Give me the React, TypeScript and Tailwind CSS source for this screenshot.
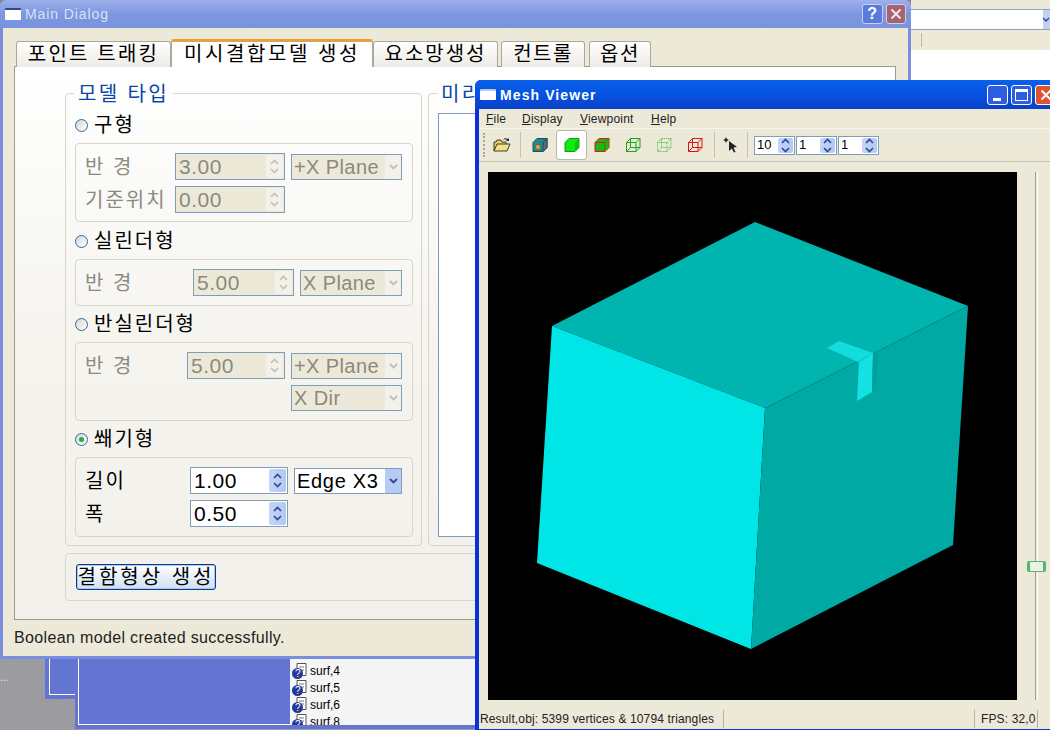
import type { ReactNode } from "react";

const surfs = ["surf,4", "surf,5", "surf,6", "surf,8"];

const menus = [
    { first: "F", rest: "ile", width: "w-[36px]" },
    { first: "D", rest: "isplay", width: "w-[58px]" },
    { first: "V", rest: "iewpoint", width: "w-[71px]" },
    { first: "H", rest: "elp", width: "w-[40px]" },
];

// small up/down pair used by every spin box
const Arrows = ({ active, small }: { active?: boolean; small?: boolean }) => (
    <span
        className={`flex flex-col items-center justify-center gap-[3px] self-stretch m-px rounded-[2px] ${small ? "w-[15px]" : "w-[17px]"} ${active ? "bg-gradient-to-r from-[#c4d5f8] to-[#b2c8f3]" : "bg-[#f2f1ea]"}`}
    >
        <svg width="9" height="6" viewBox="0 0 9 6">
            <path d="M1 5l3.5-3.5L8 5" fill="none" stroke={active ? "#2b4a8c" : "#c2c0b4"} strokeWidth="1.6" />
        </svg>
        <svg width="9" height="6" viewBox="0 0 9 6">
            <path d="M1 1l3.5 3.5L8 1" fill="none" stroke={active ? "#2b4a8c" : "#c2c0b4"} strokeWidth="1.6" />
        </svg>
    </span>
);

const Spin = ({ value, width, active }: { value: string; width: string; active?: boolean }) => (
    <div
        className={`flex h-[27px] shrink-0 items-center justify-between border border-[#7f9db9] pl-[2px] text-[21px] tracking-[0.5px] ${width} ${active ? "bg-white text-black" : "bg-[#ece9d8] text-[#8b8a7e]"}`}
    >
        <span className="pl-px">{value}</span>
        <Arrows active={active} />
    </div>
);

const Select = ({ value, width, active, className }: { value: string; width: string; active?: boolean; className?: string }) => (
    <div
        className={`flex h-[26px] shrink-0 items-center justify-between border border-[#7f9db9] pl-[2px] text-[20px] ${width} ${active ? "bg-white text-black tracking-[0.7px]" : "bg-[#ece9d8] text-[#8b8a7e] tracking-[0.4px]"} ${className ?? ""}`}
    >
        <span className="whitespace-nowrap">{value}</span>
        <span className={`flex h-full w-[16px] items-center justify-center ${active ? "bg-[#b6cbf5]" : "bg-[#f2f1ea]"}`}>
            <svg width="9" height="6" viewBox="0 0 9 6">
                <path d="M1 1l3.5 3.5L8 1" fill="none" stroke={active ? "#2b4a8c" : "#c2c0b4"} strokeWidth="1.8" />
            </svg>
        </span>
    </div>
);

const Radio = ({ label, checked, className }: { label: string; checked?: boolean; className?: string }) => (
    <div className={`ml-[9px] flex h-[24px] items-center gap-[6px] text-[20px] tracking-[2px] text-black ${className ?? ""}`}>
        <span className="flex h-[13px] w-[13px] items-center justify-center rounded-full border border-[#2f6a9a] bg-gradient-to-br from-[#d4d8d8] to-white">
            {checked && <span className="h-[5px] w-[5px] rounded-full bg-[#2fa84a]" />}
        </span>
        {label}
    </div>
);

const Box = ({ height, className, children }: { height: string; className?: string; children: ReactNode }) => (
    <div className={`ml-[9px] w-[338px] rounded-[4px] border border-[#d8d6ca] pl-[9px] ${height} ${className ?? ""}`}>{children}</div>
);

const CubeWire = ({ color, dotted }: { color: string; dotted?: boolean }) => (
    <svg width="16" height="16" viewBox="0 0 16 16" fill="none" stroke={color} strokeWidth="1" strokeDasharray={dotted ? "1 1" : undefined}>
        <path d="M1.5 5.5h9.5v9h-9.5zM1.5 5.5l4-4h9.5l-4 4M15 1.5v9l-4 4M5.5 1.5v9h9.5M5.5 10.5l-4 4" />
    </svg>
);

const CubeSolid = ({ face, edge }: { face: string; edge: string }) => (
    <svg width="16" height="16" viewBox="0 0 16 16">
        <path d="M1 5.5l4-4h10v9l-4 4H1z" fill={face} stroke={edge} />
        <path d="M1 5.5h10v9M11 5.5l4-4" fill="none" stroke={edge} />
        <path d="M11 5.5l4-4v9l-4 4z" fill={face} opacity="0.75" />
    </svg>
);

const ToolSpin = ({ value }: { value: string }) => (
    <div className="flex h-[19px] w-[41px] items-center justify-between border border-[#7f9db9] bg-white pl-[2px] text-[13px] text-black">
        {value}
        <Arrows active small />
    </div>
);

const Sep = () => <span className="mx-[1px] block h-[26px] w-px bg-[#c5c2b0]" />;

export default function App() {
    return (
        <div className="relative h-[730px] w-[1050px] overflow-hidden bg-[#85858a] font-['Liberation_Sans','Noto_Sans_CJK_KR',sans-serif]">
            {/* window behind, top right */}
            <div className="absolute left-[911px] top-0 flex h-[80px] w-[139px] flex-col bg-white">
                <div className="h-[9px] bg-[#ece9d8]" />
                <div className="flex h-[21px] items-center justify-end border-y border-[#8fa3b8] bg-white">
                    <span className="flex h-full w-[7px] items-center bg-[#c3d2f4]">
                        <svg width="7" height="6" viewBox="0 0 7 6">
                            <path d="M0 1l3 3 3-3" fill="none" stroke="#2b4a8c" strokeWidth="1.5" />
                        </svg>
                    </span>
                </div>
                <div className="flex h-[20px] items-center bg-[#ece9d8] pl-[10px]">
                    <span className="h-[14px] w-px bg-[#bdbaa8]" />
                </div>
            </div>

            {/* desktop leftovers below the dialog */}
            <div className="absolute left-0 top-[659px] h-[71px] w-[475px]">
                <svg className="absolute left-0 top-0" width="475" height="71">
                    <filter id="granite">
                        <feTurbulence type="fractalNoise" baseFrequency="0.7" numOctaves="2" seed="4" />
                        <feColorMatrix values="0 0 0 0 0.35  0 0 0 0 0.35  0 0 0 0 0.37  1.4 0 0 0 -0.3" />
                    </filter>
                    <rect width="475" height="71" fill="#9a9a9e" />
                    <rect width="475" height="71" filter="url(#granite)" />
                </svg>
                <span className="absolute left-0 top-[11px] text-[11px] leading-[14px] text-[#e4e4e4]">...</span>
                <div className="absolute left-[45px] top-0 h-[40px] w-[40px] bg-[#6374d2]">
                    <div className="ml-[4px] h-[36px] border-b border-l border-white" />
                </div>
                <div className="absolute left-[75px] top-0 flex h-[70px] w-[400px] bg-[#6374d2]">
                    <div className="ml-[3px] h-[66px] w-[212px] border-b border-l border-white" />
                    <div className="h-[66px] flex-1 overflow-hidden bg-[#f5f5f5] pl-[2px] pt-[3px]">
                        {surfs.map((s) => (
                            <div key={s} className="flex h-[17px] items-center gap-[3px] text-[12px] text-black">
                                <svg width="15" height="16" viewBox="0 0 15 16">
                                    <path d="M5 .5h9v12H5z" fill="#fff" stroke="#555" />
                                    <path d="M7 4h5M8 7h4" stroke="#777" />
                                    <circle cx="5.5" cy="10.5" r="5.5" fill="#23389a" />
                                    <text x="3" y="14" fontSize="10" fill="#fff" fontFamily="Liberation Sans">?</text>
                                </svg>
                                {s}
                            </div>
                        ))}
                    </div>
                </div>
            </div>

            {/* Main Dialog */}
            <div className="absolute left-0 top-0 flex h-[659px] w-[911px] flex-col rounded-t-[6px] bg-[#7b8ede] px-[3px] pb-[3px]">
                <div className="-mx-[3px] flex h-[28px] shrink-0 items-center rounded-t-[6px] bg-gradient-to-b from-[#9db0ea] via-[#7d96e0] to-[#7a93de] pl-[5px] pr-[5px] text-[14px] tracking-[0.9px] text-[#d9e0f6]">
                    <span className="mr-[4px] h-[12px] w-[16px] rounded-[1px] border-t-[2px] border-[#31488f] bg-white" />
                    Main Dialog
                    <div className="ml-auto flex items-center gap-[3px]">
                        <span className="flex h-[20px] w-[21px] items-center justify-center rounded-[3px] border border-[#c5d0f2] bg-[#5b7bdb] text-[16px] font-bold leading-none text-white">?</span>
                        <span className="flex h-[20px] w-[20px] items-center justify-center rounded-[3px] border border-[#c5d0f2] bg-[#a7646f]">
                            <svg width="12" height="12" viewBox="0 0 12 12">
                                <path d="M1.5 1.5l9 9M10.5 1.5l-9 9" stroke="#f2e6e6" strokeWidth="2" />
                            </svg>
                        </span>
                    </div>
                </div>

                <div className="flex min-h-0 flex-1 flex-col bg-[#ece9d8] pl-[11px] pr-[12px]">
                    {/* tabs */}
                    <div className="relative z-10 -mb-px flex h-[39px] shrink-0 items-end pl-[2px] text-[20px] text-black">
                        <div className="flex h-[26px] w-[155px] items-center justify-center rounded-t-[3px] border border-b-0 border-[#aca899] bg-gradient-to-b from-white to-[#ecebe4] pb-[2px] tracking-[2.2px]">포인트 트래킹</div>
                        <div className="flex h-[28px] w-[202px] items-center justify-center rounded-t-[3px] border-x border-t-[3px] border-[#aca899] border-t-[#e6a23c] bg-white pb-[2px] tracking-[2.6px]">미시결합모델 생성</div>
                        <div className="flex h-[26px] w-[125px] items-center justify-center rounded-t-[3px] border border-b-0 border-[#aca899] bg-gradient-to-b from-white to-[#ecebe4] pb-[2px] tracking-[2px]">요소망생성</div>
                        <div className="ml-[3px] flex h-[26px] w-[84px] items-center justify-center rounded-t-[3px] border border-b-0 border-[#aca899] bg-gradient-to-b from-white to-[#ecebe4] pb-[2px] tracking-[1.5px]">컨트롤</div>
                        <div className="ml-[4px] flex h-[26px] w-[62px] items-center justify-center rounded-t-[3px] border border-b-0 border-[#aca899] bg-gradient-to-b from-white to-[#ecebe4] pb-[2px] tracking-[1.5px]">옵션</div>
                    </div>

                    {/* pane */}
                    <div className="flex h-[554px] shrink-0 flex-col border border-[#9a9a8e] bg-gradient-to-b from-white via-[#f5f4ef] to-[#f1f0ea] pl-[50px] pt-[26px]">
                        <div className="flex gap-[6px]">
                            <div className="relative h-[453px] w-[357px] shrink-0 rounded-[4px] border border-[#d8d6ca] pt-[19px]">
                                <span className="absolute -top-[13px] left-[8px] bg-[#fdfdfc] px-[4px] text-[20px] leading-[26px] tracking-[2.4px] text-[#0a46a8]">모델 타입</span>
                                <Radio label="구형" />
                                <Box height="h-[79px]" className="mt-[6px] pt-[9px]">
                                    <div className="flex h-[27px] items-center text-[20px] tracking-[2px] text-[#8b8a7e]">
                                        <span className="w-[90px] whitespace-pre">반 경</span>
                                        <Spin value="3.00" width="w-[110px]" />
                                        <Select value="+X Plane" width="w-[111px]" className="ml-[6px]" />
                                    </div>
                                    <div className="mt-[6px] flex h-[27px] items-center text-[20px] tracking-[2px] text-[#8b8a7e]">
                                        <span className="w-[90px] whitespace-nowrap">기준위치</span>
                                        <Spin value="0.00" width="w-[110px]" />
                                    </div>
                                </Box>
                                <Radio label="실린더형" className="mt-[7px]" />
                                <Box height="h-[47px]" className="mt-[6px] pt-[9px]">
                                    <div className="flex h-[27px] items-center text-[20px] tracking-[2px] text-[#8b8a7e]">
                                        <span className="w-[108px] whitespace-pre">반 경</span>
                                        <Spin value="5.00" width="w-[101px]" />
                                        <Select value="X Plane" width="w-[102px]" className="ml-[6px]" />
                                    </div>
                                </Box>
                                <Radio label="반실린더형" className="mt-[6px]" />
                                <Box height="h-[79px]" className="mt-[6px] pt-[9px]">
                                    <div className="flex h-[27px] items-center text-[20px] tracking-[2px] text-[#8b8a7e]">
                                        <span className="w-[102px] whitespace-pre">반 경</span>
                                        <Spin value="5.00" width="w-[98px]" />
                                        <Select value="+X Plane" width="w-[111px]" className="ml-[6px]" />
                                    </div>
                                    <Select value="X Dir" width="w-[111px]" className="ml-[206px] mt-[6px]" />
                                </Box>
                                <Radio label="쐐기형" checked className="mt-[6px]" />
                                <Box height="h-[80px]" className="mt-[6px] pt-[9px]">
                                    <div className="flex h-[27px] items-center text-[20px] tracking-[2px] text-black">
                                        <span className="w-[105px]">길이</span>
                                        <Spin value="1.00" width="w-[98px]" active />
                                        <Select value="Edge X3" width="w-[108px]" className="ml-[6px]" active />
                                    </div>
                                    <div className="mt-[6px] flex h-[27px] items-center text-[20px] text-black">
                                        <span className="w-[105px]">폭</span>
                                        <Spin value="0.50" width="w-[98px]" active />
                                    </div>
                                </Box>
                            </div>
                            <div className="relative h-[453px] flex-1 rounded-[4px] border border-[#d8d6ca] pl-[9px] pt-[19px]">
                                <span className="absolute -top-[13px] left-[8px] bg-[#fdfdfc] px-[4px] text-[20px] leading-[26px] tracking-[2.4px] text-[#0a46a8]">미리</span>
                                <div className="h-[424px] border border-[#7f9db9] bg-white" />
                            </div>
                        </div>
                        <div className="mt-[7px] h-[48px] rounded-[4px] border border-[#d8d6ca] pl-[10px] pt-[10px]">
                            <button className="h-[26px] w-[140px] whitespace-nowrap rounded-[3px] border border-[#0a3a8c] bg-gradient-to-b from-white to-[#cfe0f5] text-[20px] leading-none tracking-[3px] text-black shadow-[inset_0_0_0_1px_#a9c8ee]">
                                결함형상 생성
                            </button>
                        </div>
                    </div>

                    <div className="flex flex-1 items-center text-[16px] tracking-[0.35px] text-[#222]">Boolean model created successfully.</div>
                </div>
            </div>

            {/* Mesh Viewer */}
            <div className="absolute left-[475px] top-[80px] flex h-[652px] w-[582px] flex-col rounded-t-[6px] bg-[#0831d9] px-[4px] pb-[3px]">
                <div className="-mx-[4px] flex h-[29px] shrink-0 items-center rounded-t-[6px] bg-gradient-to-b from-[#0a5fe8] via-[#0553e2] to-[#0a3fc8] pl-[5px] text-[14px] font-bold tracking-[1.1px] text-white">
                    <span className="mr-[4px] h-[11px] w-[16px] rounded-[1px] border-t-[2px] border-[#b8c8f0] bg-white" />
                    <span className="pt-[2px]">Mesh Viewer</span>
                    <div className="ml-auto flex items-center gap-[3px] pr-[1px]">
                        <span className="flex h-[20px] w-[21px] items-end rounded-[3px] border border-white bg-[#2d5ee0] pb-[3px] pl-[5px]">
                            <span className="h-[3px] w-[8px] bg-white" />
                        </span>
                        <span className="flex h-[20px] w-[21px] items-center justify-center rounded-[3px] border border-white bg-[#2d5ee0]">
                            <span className="h-[12px] w-[13px] border border-t-[3px] border-white" />
                        </span>
                        <span className="flex h-[20px] w-[21px] items-center justify-center rounded-[3px] border border-white bg-[#e0532f]">
                            <svg width="12" height="12" viewBox="0 0 12 12">
                                <path d="M1.5 1.5l9 9M10.5 1.5l-9 9" stroke="#fff" strokeWidth="2" />
                            </svg>
                        </span>
                    </div>
                </div>

                <div className="flex min-h-0 flex-1 flex-col bg-[#ece9d8]">
                    {/* menu */}
                    <div className="flex h-[19px] shrink-0 items-center pl-[7px] text-[12px] tracking-[0.2px] text-[#222]">
                        {menus.map((m) => (
                            <span key={m.first} className={m.width}>
                                <span className="underline">{m.first}</span>
                                {m.rest}
                            </span>
                        ))}
                    </div>

                    {/* toolbar */}
                    <div className="flex h-[34px] shrink-0 items-center gap-[4px] border-t border-[#f7f6ef] border-b border-b-[#c5c2b0] pl-[4px]">
                        <span className="h-[24px] w-[2px] border-l-2 border-dotted border-[#a8a698]" />
                        <span className="flex w-[26px] justify-center">
                            <svg width="18" height="16" viewBox="0 0 18 16">
                                <path d="M1 14V5h2l1-2h4l1 2h4v2" fill="#e8cf6a" stroke="#3a3a28" />
                                <path d="M1 14l3-7h13l-3 7z" fill="#f5e08a" stroke="#3a3a28" />
                                <path d="M10 3c1-2 3-2 5-1l1-1v3h-3l1-1c-1-1-3-1-4 0z" fill="#2a2a2a" />
                            </svg>
                        </span>
                        <Sep />
                        <span className="flex w-[28px] justify-center">
                            <svg width="16" height="16" viewBox="0 0 16 16">
                                <path d="M1 5.5l4-4h10v9l-4 4H1z" fill="#1f8a8a" stroke="#26455c" />
                                <path d="M11 5.5l4-4v9l-4 4z" fill="#5a6a80" stroke="#26455c" />
                                <circle cx="6" cy="10" r="2.6" fill="#d8a62a" stroke="#445" strokeWidth="0.5" />
                            </svg>
                        </span>
                        <span className="-mx-[2px] flex h-[30px] w-[31px] items-center justify-center rounded-[3px] border border-[#b9b7a8] bg-white">
                            <svg width="16" height="16" viewBox="0 0 16 16">
                                <path d="M1 5.5l4-4h10v9l-4 4H1z" fill="#12e812" stroke="#0c9c0c" />
                                <path d="M11 5.5l4-4v9l-4 4z" fill="#0cc40c" />
                            </svg>
                        </span>
                        <span className="flex w-[26px] justify-center"><CubeSolid face="#18b818" edge="#e01414" /></span>
                        <span className="flex w-[28px] justify-center"><CubeWire color="#1aa51a" /></span>
                        <span className="flex w-[26px] justify-center"><CubeWire color="#3eb83e" dotted /></span>
                        <span className="flex w-[28px] justify-center"><CubeWire color="#d81818" /></span>
                        <Sep />
                        <span className="flex w-[22px] justify-center">
                            <svg width="16" height="16" viewBox="0 0 16 16">
                                <path d="M6 4l8 6-3.5.6L12.5 15l-1.6.6-2-4.2L6 14z" fill="#222" />
                                <path d="M3 0l.9 2.1L6 3 3.9 3.9 3 6l-.9-2.1L0 3l2.1-.9z" fill="#222" />
                            </svg>
                        </span>
                        <Sep />
                        <div className="ml-[1px] flex gap-px">
                            <ToolSpin value="10" />
                            <ToolSpin value="1" />
                            <ToolSpin value="1" />
                        </div>
                    </div>

                    {/* view and slider */}
                    <div className="flex min-h-0 flex-1 items-start pl-[9px] pt-[10px]">
                        <div className="h-[528px] w-[529px] shrink-0 bg-black">
                            <svg width="529" height="528" viewBox="488 172 529 528">
                                <polygon points="755,222 968,306 765,408 552,326" fill="#00b4af" />
                                <polygon points="552,326 765,408 751,649 537,563" fill="#00e5e5" />
                                <polygon points="765,408 968,306 953,545 751,649" fill="#00a9a4" />
                                <polygon points="827,348 839,341 873,353 858,362" fill="#12dcdc" />
                                <polygon points="859,362 873,353 872,392 857,401" fill="#14e2e2" />
                                <polygon points="873,353 878,350 876,390 872,392" fill="#00a09b" />
                            </svg>
                        </div>
                        <div className="relative ml-[18px] h-[528px] w-[3px] border-x border-l-[#a3a196] border-r-white">
                            <span className="absolute -left-[9px] top-[389px] h-[11px] w-[19px] rounded-[2px] border border-x-[3px] border-[#55b56f] bg-[#eef0e8]" />
                        </div>
                    </div>

                    {/* status */}
                    <div className="flex h-[20px] shrink-0 items-center pl-[1px] text-[12px] tracking-[0.14px] text-[#222]">
                        <span className="w-[244px] border-r border-[#b5b2a2]">Result,obj: 5399 vertices &amp; 10794 triangles</span>
                        <span className="ml-[250px] w-[64px] border-x border-[#b5b2a2] pl-[6px]">FPS: 32,0</span>
                    </div>
                </div>
            </div>
        </div>
    );
}
